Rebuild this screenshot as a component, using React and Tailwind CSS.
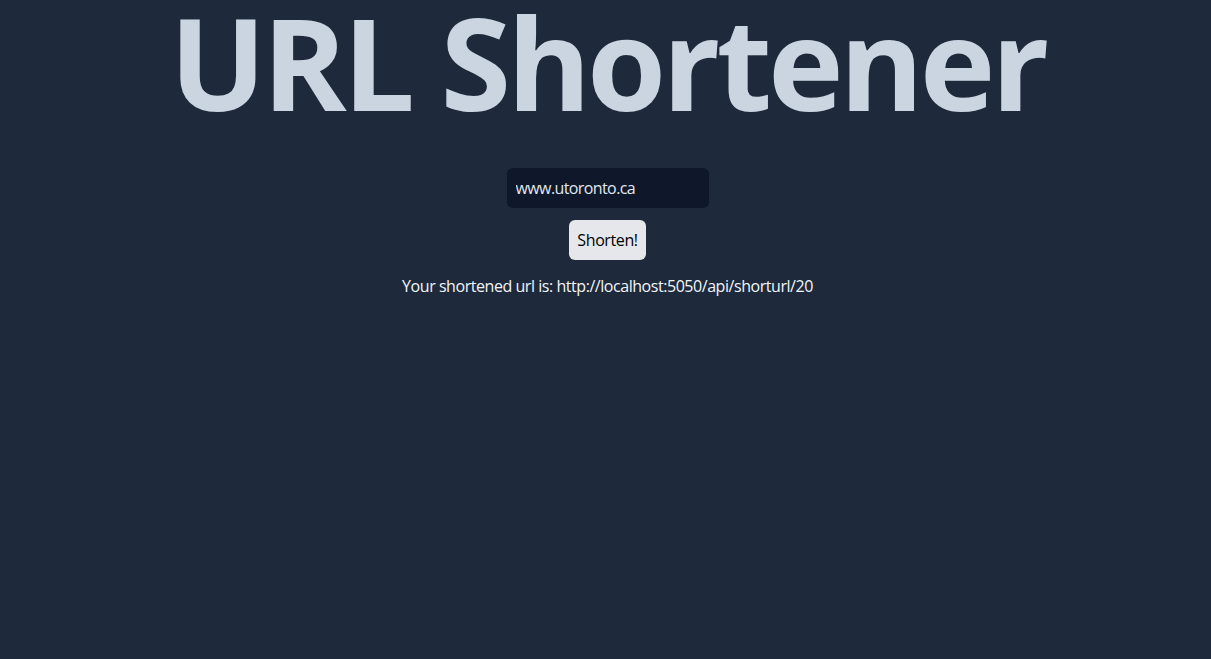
export default function App() {
  return (
    <div className="min-h-screen bg-[#1e293b] flex flex-col items-center pl-1" style={{ fontFamily: '"Open Sans", "Noto Sans", sans-serif' }}>
      <h1 className="text-[128px] leading-[124px] font-bold tracking-[-4px] text-[#cbd5e1]">URL Shortener</h1>
      <input
        className="mt-11 w-[202px] h-10 rounded-md bg-[#0f172a] px-[9px] text-base tracking-[-0.6px] text-[#e2e8f0] outline-none"
        defaultValue="www.utoronto.ca"
      />
      <button className="mt-3 h-10 px-2 rounded-md bg-[#e5e7eb] text-base tracking-[-0.4px] text-black">Shorten!</button>
      <p className="mt-[14px] text-base tracking-[-0.45px] text-[#f1f5f9]">Your shortened url is: http://localhost:5050/api/shorturl/20</p>
    </div>
  );
}
